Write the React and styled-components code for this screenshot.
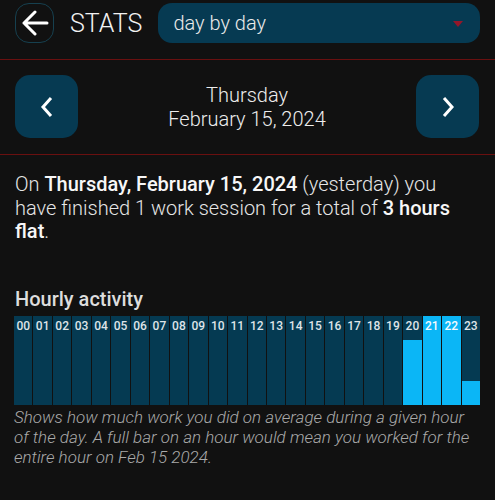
import React from "react"
import styled, { createGlobalStyle } from "styled-components"

const GlobalStyle = createGlobalStyle`
  body {
    margin: 0;
    background: #111111;
    font-family: Roboto, "Liberation Sans", sans-serif;
    color: #ececec;
  }
`

const light = `"Roboto Light", Roboto, "Liberation Sans", sans-serif`

const Page = styled.div`
  width: 495px;
  min-height: 500px;
  background: #111111;
`

const Header = styled.div`
  display: flex;
  align-items: center;
  padding: 3px 15px 16px;
  border-bottom: 1px solid #6a1010;
`

const BackButton = styled.div`
  width: 39px;
  height: 40px;
  box-sizing: border-box;
  border: 1px solid #16404f;
  border-radius: 14px;
  display: flex;
  align-items: center;
  justify-content: center;
`

const Title = styled.div`
  font-family: ${light};
  font-size: 25px;
  font-weight: 300;
  margin: 0 16px;
  color: #f2f2f2;
`

const Select = styled.div`
  flex: 1;
  height: 40px;
  border-radius: 14px;
  background: #063a52;
  display: flex;
  align-items: center;
  justify-content: space-between;
  padding: 0 17px 0 15px;
  font-family: ${light};
  font-size: 20px;
  font-weight: 300;
  color: #eaeaea;
`

const Caret = styled.div`
  width: 0;
  height: 0;
  border-left: 5px solid transparent;
  border-right: 5px solid transparent;
  border-top: 6px solid #93172a;
  margin-top: 1px;
`

const DateNav = styled.div`
  display: flex;
  align-items: center;
  justify-content: space-between;
  padding: 15px 16px 16px 15px;
  border-bottom: 1px solid #6a1010;
`

const NavButton = styled.div`
  width: 63px;
  height: 63px;
  border-radius: 15px;
  background: #063a52;
  display: flex;
  align-items: center;
  justify-content: center;
`

const DateLabel = styled.div`
  text-align: center;
  font-family: ${light};
  font-size: 20px;
  font-weight: 300;
  line-height: 24px;
  color: #ededed;
`

const Content = styled.div`
  padding: 18px 14px 0 15px;
`

const Summary = styled.p`
  margin: 0;
  font-family: ${light};
  font-size: 20px;
  line-height: 23.5px;
  font-weight: 300;
  color: #e6e6e6;

  b {
    font-family: Roboto, "Liberation Sans", sans-serif;
    font-weight: 500;
    color: #f7f7f7;
  }
`

const SectionTitle = styled.div`
  margin-top: 43px;
  font-size: 20px;
  line-height: 24px;
  font-weight: 500;
  color: #dddddd;
`

const Chart = styled.div`
  margin-top: 5px;
  margin-left: -1px;
  height: 89px;
  display: grid;
  grid-template-columns: repeat(24, 1fr);
  gap: 1px;
  width: 466px;
`

const Bar = styled.div`
  position: relative;
  background: #053a52;
  display: flex;
  flex-direction: column;
  justify-content: flex-end;
`

const Fill = styled.div`
  background: #0bb6f6;
`

const HourLabel = styled.span`
  position: absolute;
  top: 3px;
  left: 0;
  right: 0;
  text-align: center;
  font-size: 12px;
  font-weight: 500;
  color: ${props => (props.$lit ? "#f4fbff" : "#dfe4e8")};
`

const Caption = styled.p`
  margin: 2px 0 0 -1px;
  font-family: ${light};
  font-size: 17px;
  line-height: 20px;
  font-style: italic;
  font-weight: 300;
  color: #a9a9a9;
`

const activity = { 20: 0.72, 21: 1, 22: 1, 23: 0.26 }

const Chevron = ({ dir }) => (
  <svg width="16" height="22" viewBox="0 0 16 22">
    <path
      d={dir === "left" ? "M12 2 L4 11 L12 20" : "M4 2 L12 11 L4 20"}
      fill="none"
      stroke="#ffffff"
      strokeWidth="3"
    />
  </svg>
)

export default function App() {
  return (
    <Page>
      <GlobalStyle />
      <Header>
        <BackButton>
          <svg width="28" height="26" viewBox="0 0 28 26">
            <path
              d="M14 2 L3 13 L14 24 M3 13 H26"
              fill="none"
              stroke="#ffffff"
              strokeWidth="3"
              strokeLinecap="round"
              strokeLinejoin="round"
            />
          </svg>
        </BackButton>
        <Title>STATS</Title>
        <Select>
          day by day
          <Caret />
        </Select>
      </Header>
      <DateNav>
        <NavButton>
          <Chevron dir="left" />
        </NavButton>
        <DateLabel>
          Thursday
          <br />
          February 15, 2024
        </DateLabel>
        <NavButton>
          <Chevron dir="right" />
        </NavButton>
      </DateNav>
      <Content>
        <Summary>
          On <b>Thursday, February 15, 2024</b> (yesterday) you have finished 1
          work session for a total of <b>3 hours flat</b>.
        </Summary>
        <SectionTitle>Hourly activity</SectionTitle>
        <Chart>
          {Array.from({ length: 24 }, (_, h) => {
            const v = activity[h] || 0
            return (
              <Bar key={h}>
                <Fill style={{ height: `${v * 100}%` }} />
                <HourLabel $lit={v === 1}>{String(h).padStart(2, "0")}</HourLabel>
              </Bar>
            )
          })}
        </Chart>
        <Caption>
          Shows how much work you did on average during a given hour of the
          day. A full bar on an hour would mean you worked for the entire hour
          on Feb 15 2024.
        </Caption>
      </Content>
    </Page>
  )
}
